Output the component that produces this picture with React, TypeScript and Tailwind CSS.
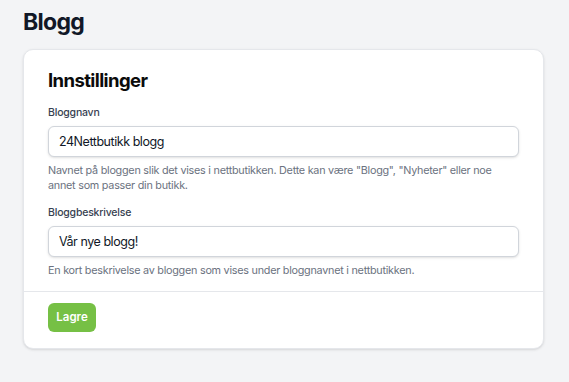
import React from "react";

export default function App() {
  return (
    <div
      className="min-h-[382px] bg-[#f3f4f6] pl-[23px] pr-[25px] pt-[6px] pb-8"
      style={{ fontFamily: "Inter, 'Noto Sans', sans-serif" }}
    >
      <h1 className="text-[23px] leading-8 font-bold text-[#111827] tracking-[-0.7px]">Blogg</h1>
      <div className="mt-[11px] rounded-[10px] border border-[#e5e7eb] bg-white shadow-sm">
        <div className="px-6 pt-4 pb-[13px]">
          <h2 className="text-[18.5px] leading-7 font-bold text-[#0b0b0b] tracking-[-0.6px]">Innstillinger</h2>
          <div className="mt-[11px]">
            <label className="block text-[10.5px] leading-4 font-medium text-[#374151] tracking-[-0.2px]">Bloggnavn</label>
            <input
              readOnly
              value="24Nettbutikk blogg"
              className="mt-[5px] block h-[31px] w-full rounded-md border border-[#d1d5db] bg-white px-[10px] text-[12.5px] tracking-[-0.45px] text-[#111827] shadow-sm outline-none"
            />
            <p className="mt-[6px] text-[10.8px] leading-[15px] text-[#6b7280] tracking-[-0.25px]">
              Navnet på bloggen slik det vises i nettbutikken. Dette kan være "Blogg", "Nyheter" eller noe annet som passer din butikk.
            </p>
          </div>
          <div className="mt-[12px]">
            <label className="block text-[10.5px] leading-4 font-medium text-[#374151] tracking-[-0.2px]">Bloggbeskrivelse</label>
            <input
              readOnly
              value="Vår nye blogg!"
              className="mt-[5px] block h-[31px] w-full rounded-md border border-[#d1d5db] bg-white px-[10px] text-[12.5px] tracking-[-0.45px] text-[#111827] shadow-sm outline-none"
            />
            <p className="mt-[6px] text-[10.8px] leading-[15px] text-[#6b7280] tracking-[-0.25px]">
              En kort beskrivelse av bloggen som vises under bloggnavnet i nettbutikken.
            </p>
          </div>
        </div>
        <div className="border-t border-[#e5e7eb] px-6 pt-[11px] pb-[16px]">
          <button className="h-[29px] w-12 rounded-md bg-[#76c045] text-[11.5px] font-semibold text-white">
            Lagre
          </button>
        </div>
      </div>
    </div>
  );
}
